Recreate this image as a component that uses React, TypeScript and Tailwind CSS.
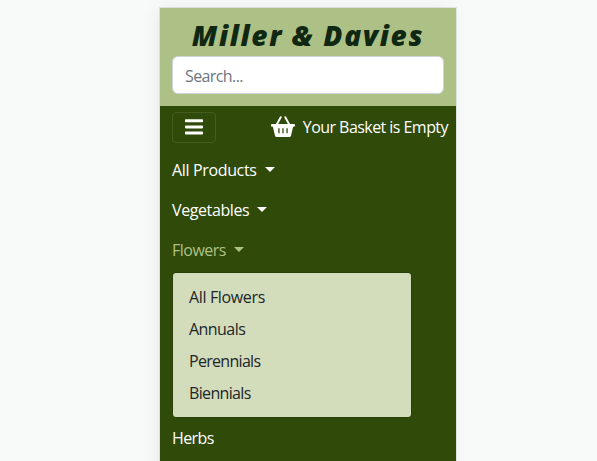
function Caret() {
  return (
    <span className="ml-2 mb-[1px] h-0 w-0 border-x-[5px] border-t-[5px] border-x-transparent border-t-current" />
  );
}

function MenuIcon() {
  return (
    <svg width="18" height="16" viewBox="0 0 18 16" fill="currentColor">
      <rect width="18" height="3" y="0.2" rx="0.8" />
      <rect width="18" height="3" y="6.4" rx="0.8" />
      <rect width="18" height="3" y="12.6" rx="0.8" />
    </svg>
  );
}

function BasketIcon() {
  return (
    <svg width="24" height="22" viewBox="0 0 24 22" className="mb-px">
      <path d="M5.5 9 9.7 1.2M18.5 9 14.3 1.2" fill="none" stroke="currentColor" strokeWidth="1.9" strokeLinecap="round" />
      <path
        fill="currentColor"
        fillRule="evenodd"
        d="M1 8h22a1 1 0 0 1 1 1v.8a1 1 0 0 1-1 1h-.9L20 19.7a1.8 1.8 0 0 1-1.8 1.3H5.8A1.8 1.8 0 0 1 4 19.7L1.9 10.8H1a1 1 0 0 1-1-1V9a1 1 0 0 1 1-1zM7.3 12.3v5h1.3v-5zM11.35 12.3v5h1.3v-5zM15.4 12.3v5h1.3v-5z"
      />
    </svg>
  );
}

const flowers = [
  { label: "All Flowers", spacing: "tracking-[-0.35px]" },
  { label: "Annuals", spacing: "tracking-[-0.55px]" },
  { label: "Perennials", spacing: "tracking-[-0.7px]" },
  { label: "Biennials", spacing: "tracking-[-0.65px]" },
];

export default function App() {
  return (
    <div className="h-[461px] overflow-hidden bg-[#f8faf9] pt-2 pl-[160px] font-['Open_Sans','Noto_Sans',sans-serif] text-base">
      <div className="h-[600px] w-[296px] bg-[#304a09] shadow-[-4px_0_16px_rgba(0,0,0,0.06),0_0_0_1px_#e3e7e3]">
        <header className="h-[98px] bg-[#adc187] px-3 pt-[9px]">
          <h1 className="flex h-[39px] items-center justify-center whitespace-nowrap pb-[3px] text-[28px] font-extrabold italic tracking-[1.7px] text-[#102712]">
            Miller &amp; Davies
          </h1>
          <input
            placeholder="Search..."
            className="block h-[38px] w-full rounded-md border border-[#ced4da] bg-white px-3 pt-0.5 tracking-[-0.6px] text-[#212529] outline-none placeholder:text-[#6c757d]"
          />
        </header>
        <nav className="text-white">
          <div className="flex h-[44px] items-center pl-3 pr-2 pt-px pb-[3px]">
            <button className="flex h-[31px] w-11 items-center justify-center rounded border border-[#445c20]">
              <MenuIcon />
            </button>
            <div className="ml-auto flex items-center gap-2 whitespace-nowrap">
              <BasketIcon />
              <span className="pb-px tracking-[-0.55px]">Your Basket is Empty</span>
            </div>
          </div>
          <a className="flex h-10 items-center pl-3 tracking-[-0.35px]">All Products<Caret /></a>
          <a className="flex h-10 items-center pl-3 tracking-[-0.4px]">Vegetables<Caret /></a>
          <a className="flex h-10 items-center pl-3 tracking-[-0.5px] text-[#adc187]">Flowers<Caret /></a>
          <div className="ml-[13px] mt-[3px] flex h-[144px] w-[238px] flex-col rounded-[3px] bg-[#d3ddbc] px-4 py-2 text-[#212529] shadow-[0_0_0_1px_#294008]">
            {flowers.map((f) => (
              <a key={f.label} className={"flex h-8 items-center " + f.spacing}>{f.label}</a>
            ))}
          </div>
          <a className="mt-px flex h-10 items-center pl-3 tracking-[-0.6px]">Herbs</a>
        </nav>
      </div>
    </div>
  );
}
